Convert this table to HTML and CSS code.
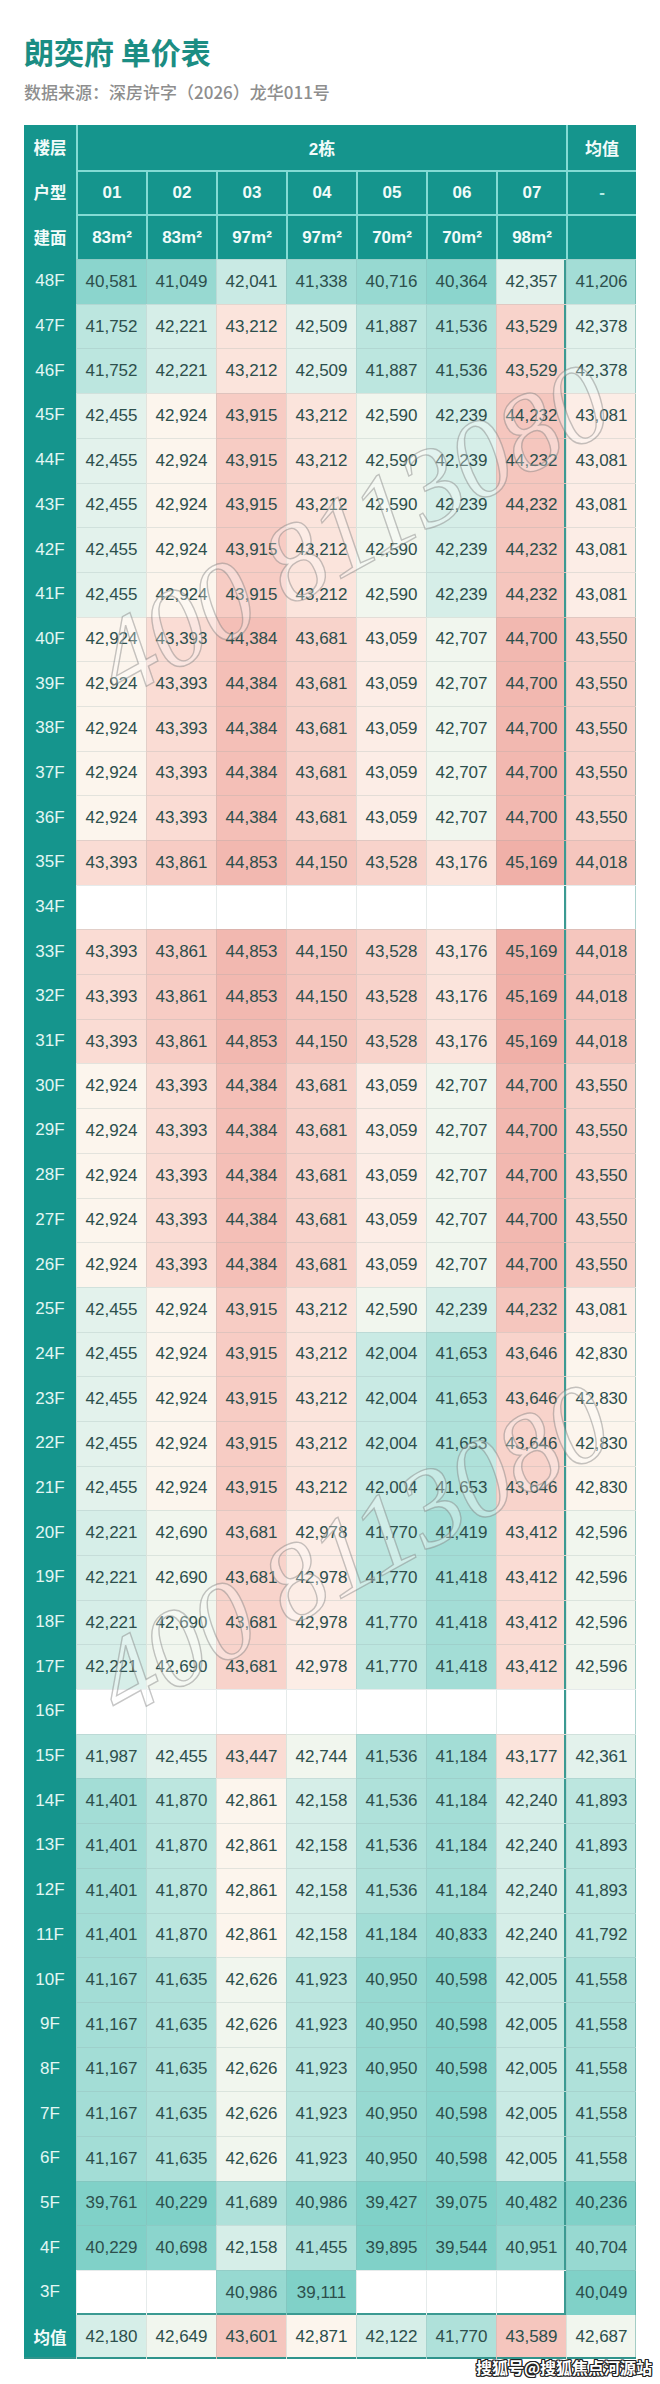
FILE: index.html
```html
<!DOCTYPE html>
<html lang="zh-CN">
<head>
<meta charset="utf-8">
<title>朗奕府 单价表</title>
<link rel="stylesheet" href="styles.css">
</head>
<body>
<div class="page">
  <header class="head">
    <h1 class="title">朗奕府 单价表</h1>
    <p class="sub">数据来源：深房许字（2026）龙华011号</p>
  </header>

  <div class="sheet">
    <div class="row hd r1"><span class="hl">楼层</span><span class="bld">2栋</span><span>均值</span></div>
    <div class="row hd"><span class="hl">户型</span><span>01</span><span>02</span><span>03</span><span>04</span><span>05</span><span>06</span><span>07</span><span class="dash">-</span></div>
    <div class="row hd"><span class="hl">建面</span><span>83m²</span><span>83m²</span><span>97m²</span><span>97m²</span><span>70m²</span><span>70m²</span><span>98m²</span><span></span></div>

    <div class="row body"><span class="fl">48F</span><span class="v1">40,581</span><span class="v2">41,049</span><span class="v6">42,041</span><span class="v3">41,338</span><span class="v2">40,716</span><span class="v1">40,364</span><span class="v8">42,357</span><span class="v3">41,206</span></div>
    <div class="row body"><span class="fl">47F</span><span class="v5">41,752</span><span class="v7">42,221</span><span class="v12">43,212</span><span class="v8">42,509</span><span class="v5">41,887</span><span class="v4">41,536</span><span class="v14">43,529</span><span class="v8">42,378</span></div>
    <div class="row body"><span class="fl">46F</span><span class="v5">41,752</span><span class="v7">42,221</span><span class="v12">43,212</span><span class="v8">42,509</span><span class="v5">41,887</span><span class="v4">41,536</span><span class="v14">43,529</span><span class="v8">42,378</span></div>
    <div class="row body"><span class="fl">45F</span><span class="v8">42,455</span><span class="v10">42,924</span><span class="v15">43,915</span><span class="v12">43,212</span><span class="v9">42,590</span><span class="v7">42,239</span><span class="v16">44,232</span><span class="v11">43,081</span></div>
    <div class="row body"><span class="fl">44F</span><span class="v8">42,455</span><span class="v10">42,924</span><span class="v15">43,915</span><span class="v12">43,212</span><span class="v9">42,590</span><span class="v7">42,239</span><span class="v16">44,232</span><span class="v11">43,081</span></div>
    <div class="row body"><span class="fl">43F</span><span class="v8">42,455</span><span class="v10">42,924</span><span class="v15">43,915</span><span class="v12">43,212</span><span class="v9">42,590</span><span class="v7">42,239</span><span class="v16">44,232</span><span class="v11">43,081</span></div>
    <div class="row body"><span class="fl">42F</span><span class="v8">42,455</span><span class="v10">42,924</span><span class="v15">43,915</span><span class="v12">43,212</span><span class="v9">42,590</span><span class="v7">42,239</span><span class="v16">44,232</span><span class="v11">43,081</span></div>
    <div class="row body"><span class="fl">41F</span><span class="v8">42,455</span><span class="v10">42,924</span><span class="v15">43,915</span><span class="v12">43,212</span><span class="v9">42,590</span><span class="v7">42,239</span><span class="v16">44,232</span><span class="v11">43,081</span></div>
    <div class="row body"><span class="fl">40F</span><span class="v10">42,924</span><span class="v13">43,393</span><span class="v17">44,384</span><span class="v14">43,681</span><span class="v11">43,059</span><span class="v9">42,707</span><span class="v18">44,700</span><span class="v14">43,550</span></div>
    <div class="row body"><span class="fl">39F</span><span class="v10">42,924</span><span class="v13">43,393</span><span class="v17">44,384</span><span class="v14">43,681</span><span class="v11">43,059</span><span class="v9">42,707</span><span class="v18">44,700</span><span class="v14">43,550</span></div>
    <div class="row body"><span class="fl">38F</span><span class="v10">42,924</span><span class="v13">43,393</span><span class="v17">44,384</span><span class="v14">43,681</span><span class="v11">43,059</span><span class="v9">42,707</span><span class="v18">44,700</span><span class="v14">43,550</span></div>
    <div class="row body"><span class="fl">37F</span><span class="v10">42,924</span><span class="v13">43,393</span><span class="v17">44,384</span><span class="v14">43,681</span><span class="v11">43,059</span><span class="v9">42,707</span><span class="v18">44,700</span><span class="v14">43,550</span></div>
    <div class="row body"><span class="fl">36F</span><span class="v10">42,924</span><span class="v13">43,393</span><span class="v17">44,384</span><span class="v14">43,681</span><span class="v11">43,059</span><span class="v9">42,707</span><span class="v18">44,700</span><span class="v14">43,550</span></div>
    <div class="row body"><span class="fl">35F</span><span class="v13">43,393</span><span class="v15">43,861</span><span class="v18">44,853</span><span class="v16">44,150</span><span class="v14">43,528</span><span class="v12">43,176</span><span class="v19">45,169</span><span class="v16">44,018</span></div>
    <div class="row body"><span class="fl">34F</span><span class="e"></span><span class="e"></span><span class="e"></span><span class="e"></span><span class="e"></span><span class="e"></span><span class="e"></span><span class="e"></span></div>
    <div class="row body"><span class="fl">33F</span><span class="v13">43,393</span><span class="v15">43,861</span><span class="v18">44,853</span><span class="v16">44,150</span><span class="v14">43,528</span><span class="v12">43,176</span><span class="v19">45,169</span><span class="v16">44,018</span></div>
    <div class="row body"><span class="fl">32F</span><span class="v13">43,393</span><span class="v15">43,861</span><span class="v18">44,853</span><span class="v16">44,150</span><span class="v14">43,528</span><span class="v12">43,176</span><span class="v19">45,169</span><span class="v16">44,018</span></div>
    <div class="row body"><span class="fl">31F</span><span class="v13">43,393</span><span class="v15">43,861</span><span class="v18">44,853</span><span class="v16">44,150</span><span class="v14">43,528</span><span class="v12">43,176</span><span class="v19">45,169</span><span class="v16">44,018</span></div>
    <div class="row body"><span class="fl">30F</span><span class="v10">42,924</span><span class="v13">43,393</span><span class="v17">44,384</span><span class="v14">43,681</span><span class="v11">43,059</span><span class="v9">42,707</span><span class="v18">44,700</span><span class="v14">43,550</span></div>
    <div class="row body"><span class="fl">29F</span><span class="v10">42,924</span><span class="v13">43,393</span><span class="v17">44,384</span><span class="v14">43,681</span><span class="v11">43,059</span><span class="v9">42,707</span><span class="v18">44,700</span><span class="v14">43,550</span></div>
    <div class="row body"><span class="fl">28F</span><span class="v10">42,924</span><span class="v13">43,393</span><span class="v17">44,384</span><span class="v14">43,681</span><span class="v11">43,059</span><span class="v9">42,707</span><span class="v18">44,700</span><span class="v14">43,550</span></div>
    <div class="row body"><span class="fl">27F</span><span class="v10">42,924</span><span class="v13">43,393</span><span class="v17">44,384</span><span class="v14">43,681</span><span class="v11">43,059</span><span class="v9">42,707</span><span class="v18">44,700</span><span class="v14">43,550</span></div>
    <div class="row body"><span class="fl">26F</span><span class="v10">42,924</span><span class="v13">43,393</span><span class="v17">44,384</span><span class="v14">43,681</span><span class="v11">43,059</span><span class="v9">42,707</span><span class="v18">44,700</span><span class="v14">43,550</span></div>
    <div class="row body"><span class="fl">25F</span><span class="v8">42,455</span><span class="v10">42,924</span><span class="v15">43,915</span><span class="v12">43,212</span><span class="v9">42,590</span><span class="v7">42,239</span><span class="v16">44,232</span><span class="v11">43,081</span></div>
    <div class="row body"><span class="fl">24F</span><span class="v8">42,455</span><span class="v10">42,924</span><span class="v15">43,915</span><span class="v12">43,212</span><span class="v6">42,004</span><span class="v4">41,653</span><span class="v14">43,646</span><span class="v10">42,830</span></div>
    <div class="row body"><span class="fl">23F</span><span class="v8">42,455</span><span class="v10">42,924</span><span class="v15">43,915</span><span class="v12">43,212</span><span class="v6">42,004</span><span class="v4">41,653</span><span class="v14">43,646</span><span class="v10">42,830</span></div>
    <div class="row body"><span class="fl">22F</span><span class="v8">42,455</span><span class="v10">42,924</span><span class="v15">43,915</span><span class="v12">43,212</span><span class="v6">42,004</span><span class="v4">41,653</span><span class="v14">43,646</span><span class="v10">42,830</span></div>
    <div class="row body"><span class="fl">21F</span><span class="v8">42,455</span><span class="v10">42,924</span><span class="v15">43,915</span><span class="v12">43,212</span><span class="v6">42,004</span><span class="v4">41,653</span><span class="v14">43,646</span><span class="v10">42,830</span></div>
    <div class="row body"><span class="fl">20F</span><span class="v7">42,221</span><span class="v9">42,690</span><span class="v14">43,681</span><span class="v11">42,978</span><span class="v5">41,770</span><span class="v3">41,419</span><span class="v13">43,412</span><span class="v9">42,596</span></div>
    <div class="row body"><span class="fl">19F</span><span class="v7">42,221</span><span class="v9">42,690</span><span class="v14">43,681</span><span class="v11">42,978</span><span class="v5">41,770</span><span class="v3">41,418</span><span class="v13">43,412</span><span class="v9">42,596</span></div>
    <div class="row body"><span class="fl">18F</span><span class="v7">42,221</span><span class="v9">42,690</span><span class="v14">43,681</span><span class="v11">42,978</span><span class="v5">41,770</span><span class="v3">41,418</span><span class="v13">43,412</span><span class="v9">42,596</span></div>
    <div class="row body"><span class="fl">17F</span><span class="v7">42,221</span><span class="v9">42,690</span><span class="v14">43,681</span><span class="v11">42,978</span><span class="v5">41,770</span><span class="v3">41,418</span><span class="v13">43,412</span><span class="v9">42,596</span></div>
    <div class="row body"><span class="fl">16F</span><span class="e"></span><span class="e"></span><span class="e"></span><span class="e"></span><span class="e"></span><span class="e"></span><span class="e"></span><span class="e"></span></div>
    <div class="row body"><span class="fl">15F</span><span class="v6">41,987</span><span class="v8">42,455</span><span class="v13">43,447</span><span class="v9">42,744</span><span class="v4">41,536</span><span class="v3">41,184</span><span class="v12">43,177</span><span class="v8">42,361</span></div>
    <div class="row body"><span class="fl">14F</span><span class="v3">41,401</span><span class="v5">41,870</span><span class="v10">42,861</span><span class="v7">42,158</span><span class="v4">41,536</span><span class="v3">41,184</span><span class="v7">42,240</span><span class="v5">41,893</span></div>
    <div class="row body"><span class="fl">13F</span><span class="v3">41,401</span><span class="v5">41,870</span><span class="v10">42,861</span><span class="v7">42,158</span><span class="v4">41,536</span><span class="v3">41,184</span><span class="v7">42,240</span><span class="v5">41,893</span></div>
    <div class="row body"><span class="fl">12F</span><span class="v3">41,401</span><span class="v5">41,870</span><span class="v10">42,861</span><span class="v7">42,158</span><span class="v4">41,536</span><span class="v3">41,184</span><span class="v7">42,240</span><span class="v5">41,893</span></div>
    <div class="row body"><span class="fl">11F</span><span class="v3">41,401</span><span class="v5">41,870</span><span class="v10">42,861</span><span class="v7">42,158</span><span class="v3">41,184</span><span class="v2">40,833</span><span class="v7">42,240</span><span class="v5">41,792</span></div>
    <div class="row body"><span class="fl">10F</span><span class="v3">41,167</span><span class="v4">41,635</span><span class="v9">42,626</span><span class="v5">41,923</span><span class="v2">40,950</span><span class="v1">40,598</span><span class="v6">42,005</span><span class="v4">41,558</span></div>
    <div class="row body"><span class="fl">9F</span><span class="v3">41,167</span><span class="v4">41,635</span><span class="v9">42,626</span><span class="v5">41,923</span><span class="v2">40,950</span><span class="v1">40,598</span><span class="v6">42,005</span><span class="v4">41,558</span></div>
    <div class="row body"><span class="fl">8F</span><span class="v3">41,167</span><span class="v4">41,635</span><span class="v9">42,626</span><span class="v5">41,923</span><span class="v2">40,950</span><span class="v1">40,598</span><span class="v6">42,005</span><span class="v4">41,558</span></div>
    <div class="row body"><span class="fl">7F</span><span class="v3">41,167</span><span class="v4">41,635</span><span class="v9">42,626</span><span class="v5">41,923</span><span class="v2">40,950</span><span class="v1">40,598</span><span class="v6">42,005</span><span class="v4">41,558</span></div>
    <div class="row body"><span class="fl">6F</span><span class="v3">41,167</span><span class="v4">41,635</span><span class="v9">42,626</span><span class="v5">41,923</span><span class="v2">40,950</span><span class="v1">40,598</span><span class="v6">42,005</span><span class="v4">41,558</span></div>
    <div class="row body"><span class="fl">5F</span><span class="v0">39,761</span><span class="v0">40,229</span><span class="v4">41,689</span><span class="v2">40,986</span><span class="v0">39,427</span><span class="v0">39,075</span><span class="v1">40,482</span><span class="v0">40,236</span></div>
    <div class="row body"><span class="fl">4F</span><span class="v0">40,229</span><span class="v1">40,698</span><span class="v7">42,158</span><span class="v4">41,455</span><span class="v0">39,895</span><span class="v0">39,544</span><span class="v2">40,951</span><span class="v2">40,704</span></div>
    <div class="row body last"><span class="fl">3F</span><span class="e"></span><span class="e"></span><span class="v2">40,986</span><span class="v0">39,111</span><span class="e"></span><span class="e"></span><span class="e"></span><span class="v0">40,049</span></div>

    <div class="row foot"><span class="fl fb">均值</span><span class="v7">42,180</span><span class="v9">42,649</span><span class="v16">43,601</span><span class="v10">42,871</span><span class="v7">42,122</span><span class="v4">41,770</span><span class="v16">43,589</span><span class="v9">42,687</span></div>
  </div>

  <div class="wm wm-top">400 8113080</div>
  <div class="wm wm-mid">400 8113080</div>
  <div class="credit">搜狐号@搜狐焦点河源站</div>
</div>
</body>
</html>
```

FILE: styles.css
```css
* { box-sizing: border-box; }

body {
  margin: 0;
  background: #ffffff;
  font-family: "Liberation Sans", "Noto Sans CJK SC", sans-serif;
}

.page {
  position: relative;
  width: 660px;
  height: 2384px;
  overflow: hidden;
}

.head {
  padding: 33px 24px 0;
}

.title {
  margin: 0;
  font: 700 30px/36px "Noto Sans CJK SC", sans-serif;
  color: #1b8d83;
}

.sub {
  margin: 11px 0 0;
  font: 500 17px/24px "Noto Sans CJK SC", sans-serif;
  color: #8e8e8e;
}

.sheet {
  margin: 21px 0 0 24px;
  width: 612px;
  height: 2234px;
  display: flex;
  flex-direction: column;
  background: #ffffff;
}

.row {
  flex: 1 1 0;
  min-height: 0;
  display: grid;
  grid-template-columns: 52px repeat(8, 1fr);
}

.row > span {
  display: flex;
  align-items: center;
  justify-content: center;
  font-size: 17px;
  color: #2d4f4c;
  border-left: 1px solid rgba(140, 165, 162, 0.22);
  border-top: 1px solid rgba(140, 165, 162, 0.22);
}

/* floor label column */
.row > .fl {
  background: #15958d;
  color: #e2f7f4;
  border: 0;
}

.row > .fb {
  font-family: "Noto Sans CJK SC", sans-serif;
  font-weight: 700;
  font-size: 16.5px;
  color: #f2fbfa;
}

/* header */
.hd > span {
  background: #15958d;
  color: #f2fbfa;
  font-weight: 700;
  font-size: 17px;
  border-left: 2px solid #84dbd4;
  border-top: 2px solid #84dbd4;
}

.hd > .hl {
  border: 0;
  font-family: "Noto Sans CJK SC", sans-serif;
  font-size: 16.5px;
}

.r1 > span { border-top: 0; }
.r1 > .bld { grid-column: span 7; }

.hd > .dash { color: #b5ece7; }

/* value scale */
.v0  { background: #80d1c8; }
.v1  { background: #8bd5cd; }
.v2  { background: #97d9d1; }
.v3  { background: #a3ddd6; }
.v4  { background: #afe1da; }
.v5  { background: #bce6df; }
.v6  { background: #c9eae4; }
.v7  { background: #d6eee8; }
.v8  { background: #e3f2ec; }
.v9  { background: #f1f6ee; }
.v10 { background: #fcf5ed; }
.v11 { background: #fcede6; }
.v12 { background: #fbe4dc; }
.v13 { background: #fadcd4; }
.v14 { background: #f8d3cb; }
.v15 { background: #f7ccc4; }
.v16 { background: #f5c6be; }
.v17 { background: #f4bfb7; }
.v18 { background: #f2b8b0; }
.v19 { background: #f0b0a8; }
.e   { background: #ffffff; }

/* framed block of units 01-07 */
.body > span:nth-child(8) { box-shadow: inset -2px 0 #3b9a92; }
.body > span:nth-child(9) { box-shadow: inset -1px 0 rgba(70, 155, 147, 0.45); }
.last > span:nth-child(n+2) { box-shadow: inset 0 -2px #3b9a92; }
.last > span:nth-child(8) { box-shadow: inset -2px 0 #3b9a92, inset 0 -2px #3b9a92; }
.last > span:nth-child(9) { box-shadow: inset -1px 0 rgba(70, 155, 147, 0.45); }

.foot > span { box-shadow: inset 0 -2px #2f948c; border-top: 0; }
.foot > span:last-child { box-shadow: inset 0 -2px #2f948c, inset -1px 0 rgba(70, 155, 147, 0.45); }

/* diagonal phone-number watermark */
.wm {
  position: absolute;
  left: 22px;
  width: 660px;
  height: 120px;
  text-align: center;
  font: italic 400 110px/120px "Liberation Serif", serif;
  white-space: nowrap;
  color: rgba(255, 255, 255, 0.3);
  -webkit-text-stroke: 1.4px rgba(120, 120, 120, 0.42);
  transform: rotate(-29deg);
  transform-origin: 50% 50%;
}

.wm-top { top: 470px; }
.wm-mid { top: 1490px; }

.credit {
  position: absolute;
  left: 476px;
  top: 2356px;
  font: 700 16px/22px "Noto Sans CJK SC", sans-serif;
  color: #ffffff;
  white-space: nowrap;
  text-shadow: 1px 0 #222, -1px 0 #222, 0 1px #222, 0 -1px #222,
               1px 1px #222, -1px -1px #222, 1px -1px #222, -1px 1px #222;
}
```
